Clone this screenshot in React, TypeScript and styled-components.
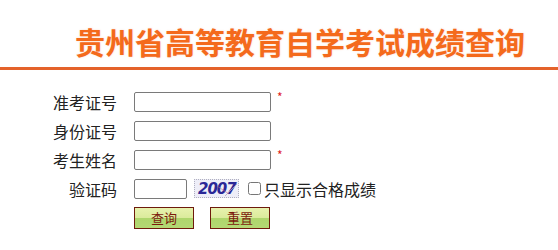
import React from "react";
import { styled, createGlobalStyle } from "styled-components";

const GlobalStyle = createGlobalStyle`
  body {
    margin: 0;
    background: #ffffff;
    font-family: "Noto Sans CJK SC", "Noto Sans", sans-serif;
    color: #222;
  }
`;

const Header = styled.div`
  padding: 26px 0 11px 75px;
  border-bottom: 3px solid #e4622a;
`;

const Title = styled.h1`
  margin: 0;
  font-size: 30px;
  line-height: 30px;
  font-weight: bold;
  color: #f46a1c;
  text-shadow: 0 0 2px rgba(244, 106, 28, 0.25);
`;

const Form = styled.div`
  padding-top: 17px;
`;

const Row = styled.div<{ $h?: number }>`
  display: grid;
  grid-template-columns: 117px auto;
  column-gap: 17px;
  align-items: center;
  height: ${(p) => p.$h ?? 29}px;
`;

const Label = styled.label`
  font-size: 16px;
  line-height: 20px;
  text-align: right;
  color: #222;
`;

const Field = styled.div`
  display: flex;
  align-items: center;
`;

const TextInput = styled.input<{ $w?: number }>`
  box-sizing: border-box;
  width: ${(p) => p.$w ?? 137}px;
  height: 20px;
  margin: 0;
  padding: 0 3px;
  border: 1px solid #7a7a7a;
  border-radius: 2px;
  background: #fff;
  font-size: 13px;
  outline: none;
`;

const Star = styled.span`
  color: #e0221e;
  font-size: 12px;
  align-self: flex-start;
  margin: -1px 0 0 6px;
  line-height: 12px;
`;

const Captcha = styled.span`
  position: relative;
  box-sizing: border-box;
  display: inline-flex;
  align-items: center;
  width: 45px;
  height: 19px;
  margin-left: 7px;
  padding-left: 3px;
  border: 1px dotted #b0b0c0;
  background: #eeeef8;
  font-family: "DejaVu Sans", "Liberation Sans", sans-serif;
  font-size: 15px;
  font-weight: bold;
  font-style: italic;
  color: #2a2796;
  letter-spacing: -1px;
  overflow: hidden;
`;

const Noise = styled.svg`
  position: absolute;
  left: 0;
  top: 0;
`;

const Check = styled.input`
  width: 13px;
  height: 13px;
  margin: 0 3px 0 9px;
`;

const CheckText = styled.span`
  font-size: 16px;
  line-height: 20px;
  color: #222;
`;

const Buttons = styled.div`
  display: flex;
  gap: 16px;
`;

const Button = styled.button`
  box-sizing: border-box;
  width: 60px;
  height: 22px;
  padding: 0;
  border: 1px solid #6e1a0c;
  background: linear-gradient(#e8f2ae 0%, #dbeb9c 48%, #aed66c 52%, #b4d874 100%);
  color: #7c1a0c;
  font-family: "Noto Sans CJK SC", sans-serif;
  font-size: 13px;
  line-height: 20px;
  cursor: pointer;
`;

export default function App() {
  return (
    <>
      <GlobalStyle />
      <Header>
        <Title>贵州省高等教育自学考试成绩查询</Title>
      </Header>
      <Form>
        <Row>
          <Label>准考证号</Label>
          <Field>
            <TextInput />
            <Star>*</Star>
          </Field>
        </Row>
        <Row>
          <Label>身份证号</Label>
          <Field>
            <TextInput />
          </Field>
        </Row>
        <Row>
          <Label>考生姓名</Label>
          <Field>
            <TextInput />
            <Star>*</Star>
          </Field>
        </Row>
        <Row>
          <Label>验证码</Label>
          <Field>
            <TextInput $w={53} />
            <Captcha>
              2007
              <Noise width="45" height="19" viewBox="0 0 45 19">
                <line x1="30" y1="16" x2="42" y2="4" stroke="#b0a0b8" strokeWidth="0.8" />
                <line x1="22" y1="6" x2="34" y2="14" stroke="#c86a8a" strokeWidth="0.6" />
              </Noise>
            </Captcha>
            <Check type="checkbox" />
            <CheckText>只显示合格成绩</CheckText>
          </Field>
        </Row>
        <Row $h={30}>
          <span />
          <Buttons>
            <Button>查询</Button>
            <Button>重置</Button>
          </Buttons>
        </Row>
      </Form>
    </>
  );
}
